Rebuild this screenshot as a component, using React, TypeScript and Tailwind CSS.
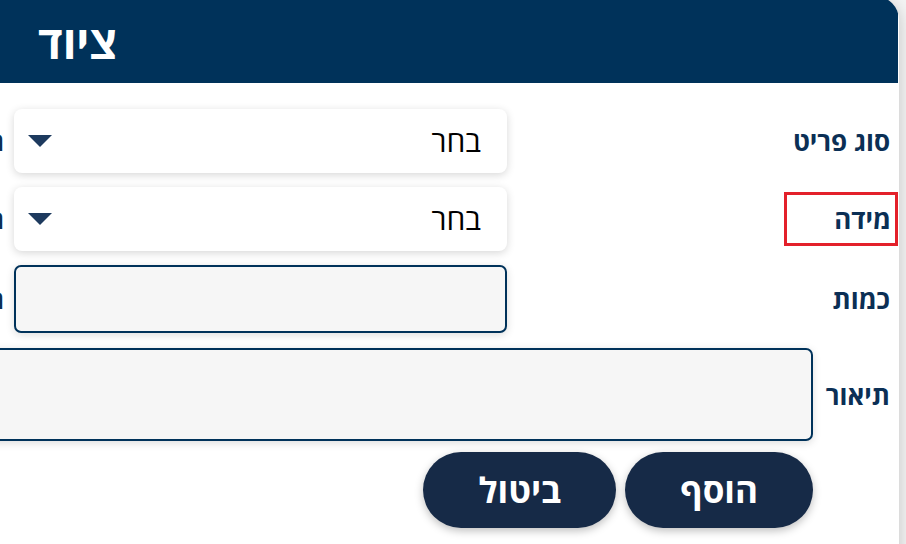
import React from 'react';

const leftLabels = ['הערות', 'הספק', 'הערה'];

const Triangle = () => (
  <svg width="24" height="12" viewBox="0 0 24 12">
    <path d="M0 0 L24 0 L12 12 Z" fill="#1d3a5e" />
  </svg>
);

const SelectBox = () => (
  <div className="w-[493px] h-[64px] bg-white rounded-[8px] shadow-[0_2px_8px_rgba(0,0,0,0.16)] flex items-center justify-between pr-[26px] pl-[14px]">
    <span className="text-[30px] text-black leading-none">בחר</span>
    <Triangle />
  </div>
);

const TextBox = () => (
  <div className="w-[493px] h-[68px] bg-[#f6f6f6] border-2 border-[#00325a] rounded-[7px] shadow-[0_2px_8px_rgba(0,0,0,0.14)]" />
);

interface RowProps {
  label: string;
  marked?: boolean;
  tight?: boolean;
  children: React.ReactNode;
}

const Row: React.FC<RowProps> = ({ label, marked, tight, children }) => {
  let cell = 'w-[114px] h-[54px] flex items-center justify-start pr-[8px]';
  if (marked) cell = 'w-[114px] h-[54px] flex items-center justify-start pr-[4px] border-[3px] border-[#e3202a]';
  if (tight) cell = 'w-[114px] h-[54px] flex items-center justify-start pr-[5px]';

  return (
    <div className="flex items-center">
      <div className={cell}>
        <span className="text-[26px] font-bold text-[#0b2f55] leading-none whitespace-nowrap">{label}</span>
      </div>
      <div className="flex-1 flex justify-end pl-[5px]">{children}</div>
    </div>
  );
};

export default function App() {
  return (
    <div dir="rtl" className="w-[906px] h-[544px] overflow-hidden bg-[#f3f3f3] font-['Open_Sans',sans-serif]">
      <div className="mr-[7px] -mt-1 w-[1790px] h-[580px] bg-white rounded-[24px] shadow-[0_4px_16px_rgba(0,0,0,0.2)] overflow-hidden pr-[1px]">
        {/* Header */}
        <div className="h-[87px] bg-[#00325a] flex pt-1">
          <div className="w-[889px] flex items-center justify-end pl-[29px]">
            <h1 className="text-[45px] font-bold text-white leading-none">ציוד</h1>
          </div>
        </div>

        {/* Fields */}
        <div className="pt-[26px]">
          <div className="flex">
            <div className="w-[889px] flex flex-col gap-[14px]">
              <Row label="סוג פריט">
                <SelectBox />
              </Row>
              <Row label="מידה" marked>
                <SelectBox />
              </Row>
              <Row label="כמות">
                <TextBox />
              </Row>
            </div>
            <div className="w-[889px] flex flex-col gap-[14px]">
              <Row label={leftLabels[0]} tight>
                <SelectBox />
              </Row>
              <Row label={leftLabels[1]} tight>
                <SelectBox />
              </Row>
              <Row label={leftLabels[2]} tight>
                <TextBox />
              </Row>
            </div>
          </div>

          <div className="flex items-center mt-[15px]">
            <div className="w-[85px] flex justify-start pr-[8px]">
              <span className="text-[26px] font-bold text-[#0b2f55] leading-none">תיאור</span>
            </div>
            <div className="flex-1 h-[93px] bg-[#f6f6f6] border-2 border-[#00325a] rounded-[7px] shadow-[0_2px_8px_rgba(0,0,0,0.14)]" />
          </div>

          <div className="flex gap-[9px] pr-[85px] mt-[11px]">
            <button className="h-[76px] px-[55px] rounded-full bg-[#162a47] text-white text-[35px] font-bold shadow-[0_3px_8px_rgba(0,0,0,0.25)]">
              הוסף
            </button>
            <button className="h-[76px] px-[55px] rounded-full bg-[#162a47] text-white text-[35px] font-bold shadow-[0_3px_8px_rgba(0,0,0,0.25)]">
              ביטול
            </button>
          </div>
        </div>
      </div>
    </div>
  );
}
